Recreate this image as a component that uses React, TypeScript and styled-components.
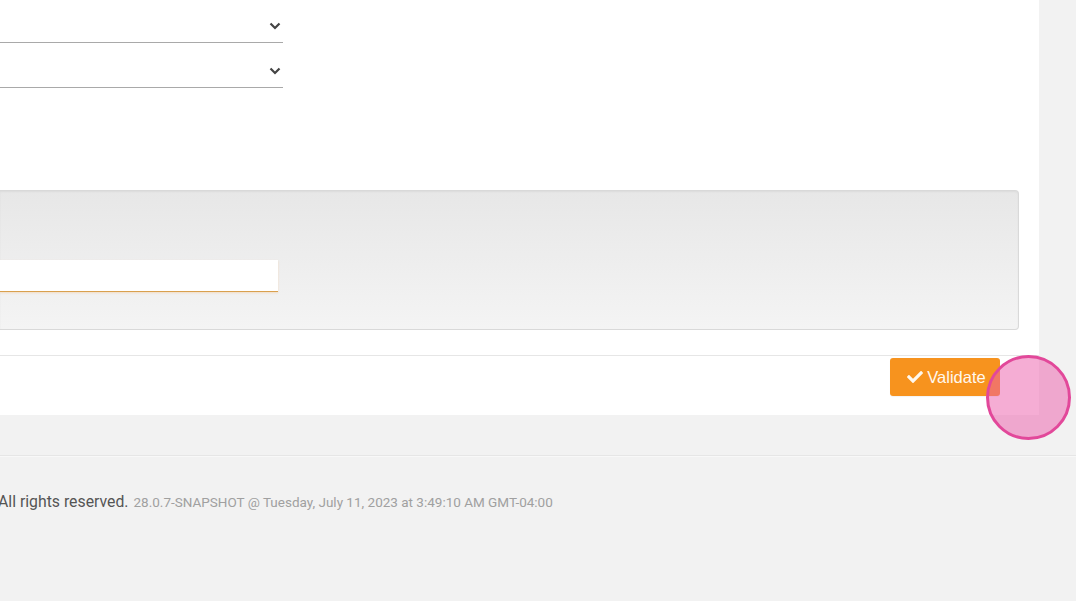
import React from "react";
import styled, { createGlobalStyle } from "styled-components";
import { FaCheck } from "react-icons/fa";

const Global = createGlobalStyle`
  html, body { margin: 0; padding: 0; }
  body {
    background: #f2f2f2;
    font-family: Roboto, "Liberation Sans", Arial, sans-serif;
    width: 1076px;
    height: 601px;
    overflow: hidden;
  }
`;

const Page = styled.div`
  position: relative;
  width: 1076px;
  height: 601px;
  display: flex;
  flex-direction: column;
`;

const Main = styled.div`
  width: 1039px;
  height: 415px;
  background: #ffffff;
  display: flex;
  flex-direction: column;
  box-sizing: border-box;
`;

const SelectStack = styled.div`
  display: flex;
  flex-direction: column;
  gap: 2px;
  width: 283px;
`;

const SelectBox = styled.div`
  height: 43px;
  box-sizing: border-box;
  border-bottom: 1px solid #a9a9a9;
  display: flex;
  align-items: center;
  justify-content: flex-end;
  padding: 10px 2px 0 0;
  color: #444;
`;

const Well = styled.div`
  margin-top: 102px;
  width: 1019px;
  height: 140px;
  box-sizing: border-box;
  border: 1px solid #d9d9d9;
  border-left: none;
  border-radius: 0 4px 4px 0;
  background: linear-gradient(to bottom, #e7e7e7 0%, #f4f4f4 100%);
  box-shadow: inset 0 1px 2px rgba(0, 0, 0, 0.05);
  padding-top: 69px;
`;

const TextInput = styled.div`
  width: 278px;
  height: 32px;
  box-sizing: border-box;
  background: #ffffff;
  border-bottom: 1px solid #d9a04e;
  box-shadow: 0 1px 2px rgba(247, 160, 60, 0.25);
`;

const ActionBar = styled.div`
  margin-top: 25px;
  border-top: 1px solid #e6e6e6;
  flex: 1;
  display: flex;
  justify-content: flex-end;
  align-items: flex-start;
  padding: 2px 39px 0 0;
`;

const PrimaryButton = styled.button`
  width: 110px;
  height: 38px;
  border: none;
  border-radius: 3px;
  background: #f7931e;
  color: #fff8ee;
  font-family: "Liberation Sans", Arial, sans-serif;
  font-size: 16.5px;
  display: flex;
  align-items: center;
  justify-content: center;
  gap: 4px;
  padding: 0 0 0 3px;
  box-shadow: 0 1px 1px rgba(0, 0, 0, 0.05);
  svg { width: 16px; height: 16px; }
`;

const Divider = styled.div`
  margin-top: 40px;
  height: 1px;
  background: #e6e6e6;
  box-shadow: 0 1px 0 #f8f8f8;
`;

const Footer = styled.div`
  margin-top: 36px;
  margin-left: -2px;
  display: flex;
  align-items: baseline;
  gap: 5px;
  white-space: nowrap;
`;

const Rights = styled.span`
  font-size: 15.8px;
  color: #555555;
`;

const Version = styled.span`
  font-size: 13.5px;
  color: #a0a0a0;
`;

const Cursor = styled.div`
  position: absolute;
  left: 986px;
  top: 355px;
  width: 85px;
  height: 85px;
  box-sizing: border-box;
  border-radius: 50%;
  border: 3px solid #e2489a;
  background: rgba(236, 92, 170, 0.5);
  pointer-events: none;
`;

const Chevron = () => (
  <svg width="12" height="8" viewBox="0 0 12 8">
    <polyline points="1.5,1.5 6,6 10.5,1.5" fill="none" stroke="#444" strokeWidth="2.2" />
  </svg>
);

export default function App() {
  return (
    <>
      <Global />
      <Page>
        <Main>
          <SelectStack>
            <SelectBox><Chevron /></SelectBox>
            <SelectBox><Chevron /></SelectBox>
          </SelectStack>
          <Well>
            <TextInput />
          </Well>
          <ActionBar>
            <PrimaryButton>
              <FaCheck />
              Validate
            </PrimaryButton>
          </ActionBar>
        </Main>
        <Divider />
        <Footer>
          <Rights>All rights reserved.</Rights>
          <Version>28.0.7-SNAPSHOT @ Tuesday, July 11, 2023 at 3:49:10 AM GMT-04:00</Version>
        </Footer>
        <Cursor />
      </Page>
    </>
  );
}
